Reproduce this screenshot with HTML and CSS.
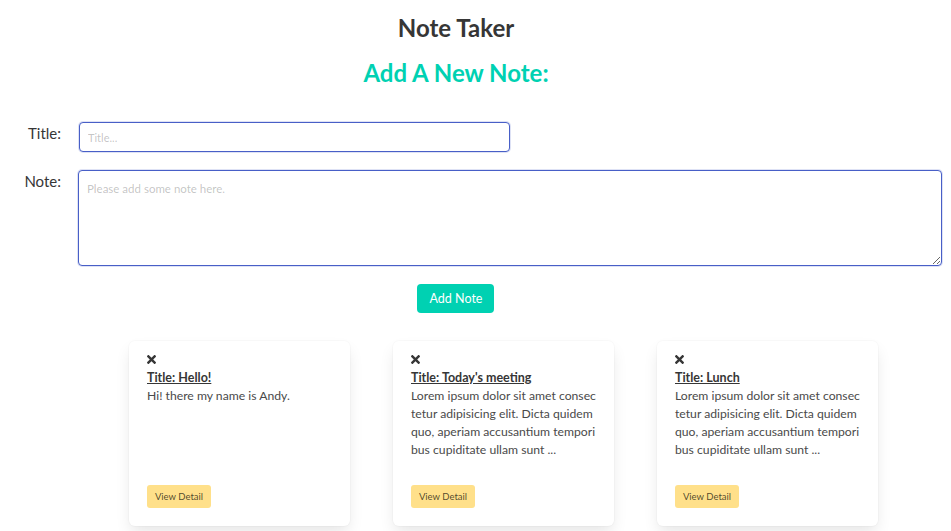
FILE: index.html
```html
<!DOCTYPE html>
<html lang="en">
<head>
<meta charset="utf-8">
<title>Note Taker</title>
<link rel="stylesheet" href="styles.css">
</head>
<body>
<main class="page">
  <header class="head">
    <h1 class="title">Note Taker</h1>
    <h2 class="subtitle">Add A New Note:</h2>
  </header>
  <form class="note-form">
    <div class="field">
      <label class="label" for="t">Title:</label>
      <input id="t" class="input" type="text" placeholder="Title...">
    </div>
    <div class="field">
      <label class="label" for="n">Note:</label>
      <textarea id="n" class="textarea" placeholder="Please add some note here."></textarea>
    </div>
    <div class="actions"><button type="button" class="btn-add">Add Note</button></div>
  </form>
  <section class="cards">
    <article class="card">
      <svg class="x" viewBox="0 0 352 512" aria-hidden="true"><path d="M242.72 256l100.07-100.07c12.28-12.28 12.28-32.19 0-44.48l-22.24-22.24c-12.28-12.28-32.19-12.28-44.48 0L176 189.28 75.93 89.21c-12.28-12.28-32.19-12.28-44.48 0L9.21 111.45c-12.28 12.28-12.28 32.19 0 44.48L109.28 256 9.21 356.07c-12.28 12.28-12.28 32.19 0 44.48l22.24 22.24c12.28 12.28 32.2 12.28 44.48 0L176 322.72l100.07 100.07c12.28 12.28 32.2 12.28 44.48 0l22.24-22.24c12.28-12.28 12.28-32.19 0-44.48L242.72 256z"/></svg>
      <a class="card-title" href="#">Title: Hello!</a>
      <p class="card-text">Hi! there my name is Andy.</p>
      <button type="button" class="btn-detail">View Detail</button>
    </article>
    <article class="card">
      <svg class="x" viewBox="0 0 352 512" aria-hidden="true"><path d="M242.72 256l100.07-100.07c12.28-12.28 12.28-32.19 0-44.48l-22.24-22.24c-12.28-12.28-32.19-12.28-44.48 0L176 189.28 75.93 89.21c-12.28-12.28-32.19-12.28-44.48 0L9.21 111.45c-12.28 12.28-12.28 32.19 0 44.48L109.28 256 9.21 356.07c-12.28 12.28-12.28 32.19 0 44.48l22.24 22.24c12.28 12.28 32.2 12.28 44.48 0L176 322.72l100.07 100.07c12.28 12.28 32.2 12.28 44.48 0l22.24-22.24c12.28-12.28 12.28-32.19 0-44.48L242.72 256z"/></svg>
      <a class="card-title" href="#">Title: Today's meeting</a>
      <p class="card-text">Lorem ipsum dolor sit amet consectetur adipisicing elit. Dicta quidem quo, aperiam accusantium temporibus cupiditate ullam sunt ...</p>
      <button type="button" class="btn-detail">View Detail</button>
    </article>
    <article class="card">
      <svg class="x" viewBox="0 0 352 512" aria-hidden="true"><path d="M242.72 256l100.07-100.07c12.28-12.28 12.28-32.19 0-44.48l-22.24-22.24c-12.28-12.28-32.19-12.28-44.48 0L176 189.28 75.93 89.21c-12.28-12.28-32.19-12.28-44.48 0L9.21 111.45c-12.28 12.28-12.28 32.19 0 44.48L109.28 256 9.21 356.07c-12.28 12.28-12.28 32.19 0 44.48l22.24 22.24c12.28 12.28 32.2 12.28 44.48 0L176 322.72l100.07 100.07c12.28 12.28 32.2 12.28 44.48 0l22.24-22.24c12.28-12.28 12.28-32.19 0-44.48L242.72 256z"/></svg>
      <a class="card-title" href="#">Title: Lunch</a>
      <p class="card-text">Lorem ipsum dolor sit amet consectetur adipisicing elit. Dicta quidem quo, aperiam accusantium temporibus cupiditate ullam sunt ...</p>
      <button type="button" class="btn-detail">View Detail</button>
    </article>
  </section>
</main>
</body>
</html>
```

FILE: styles.css
```css
* { box-sizing: border-box; }
html, body { margin: 0; padding: 0; background: #fff; }
body {
  font-family: Lato, "Open Sans", sans-serif;
  color: #4a4a4a;
  font-size: 16px;
}
.page { width: 951px; height: 531px; overflow: hidden; }

.head { width: 912px; text-align: center; padding-top: 12px; }
.title {
  margin: 0;
  font-size: 24px;
  font-weight: 700;
  line-height: 32px;
  color: #363636;
}
.subtitle {
  margin: 13px 0 0;
  font-size: 24px;
  font-weight: 700;
  line-height: 32px;
  color: #00d1b2;
}

.note-form { padding-top: 33px; }
.field { display: flex; align-items: flex-start; margin-bottom: 18px; }
.label {
  width: 61px;
  text-align: right;
  font-size: 15px;
  color: #363636;
  padding-top: 1px;
  line-height: 20px;
}
.input, .textarea {
  font-family: Lato, "Open Sans", sans-serif;
  border: 1px solid #485fc7;
  border-radius: 4px;
  box-shadow: 0 0 0 1px rgba(72, 95, 199, 0.18);
  background: #fff;
  color: #363636;
  outline: none;
}
.input {
  margin-left: 18px;
  width: 431px;
  height: 30px;
  padding: 0 8px;
  font-size: 11px;
}
.textarea {
  margin-left: 17px;
  width: 864px;
  height: 96px;
  padding: 11px 8px;
  font-size: 11.5px;
  resize: vertical;
}
.input::placeholder, .textarea::placeholder { color: rgba(54, 54, 54, 0.3); }

.actions { width: 911px; display: flex; justify-content: center; }
.btn-add {
  width: 77px;
  height: 29px;
  border: none;
  border-radius: 4px;
  background: #00d1b2;
  color: #fff;
  font-family: Lato, "Open Sans", sans-serif;
  font-size: 12.5px;
  padding: 0 0 0 1px;
}

.cards {
  display: flex;
  gap: 43px;
  padding-left: 129px;
  margin-top: 28px;
}
.card {
  width: 221px;
  height: 185px;
  background: #fff;
  border-radius: 6px;
  box-shadow: 0 8px 16px -2px rgba(10, 10, 10, 0.1), 0 0 0 1px rgba(10, 10, 10, 0.02);
  padding: 12px 18px 18px;
  display: flex;
  flex-direction: column;
  align-items: flex-start;
}
.x { width: 9px; height: 13px; fill: #363636; margin-bottom: 3px; }
.card-title {
  font-size: 12.5px;
  font-weight: 700;
  color: #363636;
  text-decoration: underline;
  line-height: 17px;
}
.card-text {
  margin: 1px 0 0;
  font-size: 12.2px;
  line-height: 18px;
  color: #4a4a4a;
  width: 185px;
  word-break: break-all;
}
.btn-detail {
  margin-top: auto;
  width: 64px;
  height: 23px;
  border: none;
  border-radius: 3px;
  background: #ffe08a;
  color: rgba(0, 0, 0, 0.7);
  font-family: Lato, "Open Sans", sans-serif;
  font-size: 9.5px;
  padding: 0;
}
```
